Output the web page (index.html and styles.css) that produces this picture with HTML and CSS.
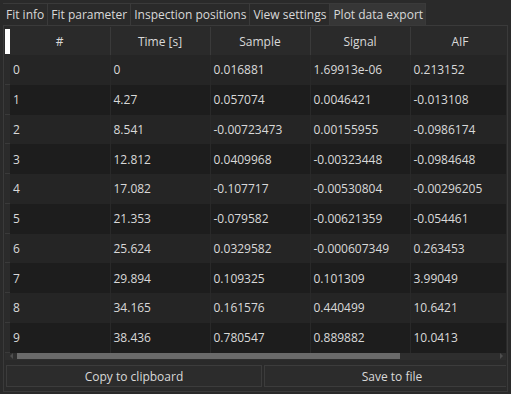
FILE: index.html
```html
<!DOCTYPE html>
<html lang="en">
<head>
    <meta charset="UTF-8" />
    <title>Plot data export</title>
    <link rel="stylesheet" href="styles.css">
</head>
<body>
    <div class="window">
        <div class="tabs">
            <div class="tab">Fit info</div>
            <div class="tab">Fit parameter</div>
            <div class="tab">Inspection positions</div>
            <div class="tab">View settings</div>
            <div class="tab active">Plot data export</div>
        </div>

        <div class="pane">
            <div class="grid">
                <table class="data">
                    <colgroup>
                        <col class="col-vh">
                        <col class="col">
                        <col class="col">
                        <col class="col">
                        <col class="col">
                        <col class="col">
                    </colgroup>
                    <thead>
                        <tr>
                            <th class="corner"><span class="corner-box"></span></th>
                            <th>#</th>
                            <th>Time [s]</th>
                            <th>Sample</th>
                            <th>Signal</th>
                            <th>AIF</th>
                        </tr>
                    </thead>
                    <tbody>
                        <tr><td class="vh"></td><td>0</td><td>0</td><td>0.016881</td><td>1.69913e-06</td><td>0.213152</td></tr>
                        <tr><td class="vh"></td><td>1</td><td>4.27</td><td>0.057074</td><td>0.0046421</td><td>-0.013108</td></tr>
                        <tr><td class="vh"></td><td>2</td><td>8.541</td><td>-0.00723473</td><td>0.00155955</td><td>-0.0986174</td></tr>
                        <tr><td class="vh"></td><td>3</td><td>12.812</td><td>0.0409968</td><td>-0.00323448</td><td>-0.0984648</td></tr>
                        <tr><td class="vh"></td><td>4</td><td>17.082</td><td>-0.107717</td><td>-0.00530804</td><td>-0.00296205</td></tr>
                        <tr><td class="vh"></td><td>5</td><td>21.353</td><td>-0.079582</td><td>-0.00621359</td><td>-0.054461</td></tr>
                        <tr><td class="vh"></td><td>6</td><td>25.624</td><td>0.0329582</td><td>-0.000607349</td><td>0.263453</td></tr>
                        <tr><td class="vh"></td><td>7</td><td>29.894</td><td>0.109325</td><td>0.101309</td><td>3.99049</td></tr>
                        <tr><td class="vh"></td><td>8</td><td>34.165</td><td>0.161576</td><td>0.440499</td><td>10.6421</td></tr>
                        <tr><td class="vh"></td><td>9</td><td>38.436</td><td>0.780547</td><td>0.889882</td><td>10.0413</td></tr>
                    </tbody>
                </table>
            </div>

            <div class="hscroll">
                <span class="arrow arrow-left"></span>
                <span class="handle"></span>
                <span class="arrow arrow-right"></span>
            </div>

            <div class="buttons">
                <button class="btn">Copy to clipboard</button>
                <button class="btn">Save to file</button>
            </div>
        </div>
    </div>
</body>
</html>
```

FILE: styles.css
```css
:root {
    --bg: #2a2a2a;
    --line: #3a3a3a;
    --text: #d9d9d9;
    --row-a: #252525;
    --row-b: #1d1d1d;
}

body {
    margin: 0;
    background-color: var(--bg);
    font-family: "Open Sans", "DejaVu Sans", sans-serif;
    font-size: 12px;
    color: var(--text);
}

.window {
    width: 511px;
    height: 394px;
    padding: 3px 3px 0;
    box-sizing: border-box;
    overflow: hidden;
}

/* tab bar */
.tabs {
    display: flex;
    height: 22px;
}

.tab {
    padding: 0 3px;
    line-height: 21px;
    border-top: 1px solid var(--line);
    border-right: 1px solid var(--line);
    white-space: nowrap;
}

.tab.active {
    padding: 0 2px 0 3px;
    background-color: #363636;
}

.pane {
    border: 1px solid var(--line);
    padding: 1px;
}

/* table */
.grid {
    height: 325.5px;
    overflow: hidden;
}

.data {
    border-collapse: collapse;
    table-layout: fixed;
    width: 505px;
}

.col-vh {
    width: 5px;
}

.col {
    width: 100px;
}

.data th {
    height: 28px;
    padding: 0;
    font-weight: normal;
    text-align: center;
    background-color: var(--bg);
    border-right: 1px solid var(--line);
    white-space: nowrap;
}

.data th.corner {
    border-right: none;
    vertical-align: middle;
}

.corner-box {
    display: block;
    width: 5px;
    height: 25px;
    margin-top: 1px;
    background-color: #ffffff;
}

.data tbody tr {
    height: 29.75px;
}

.data td {
    padding: 0 3px;
    white-space: nowrap;
    overflow: hidden;
    border-right: 1px solid #292929;
}

.data tbody tr:nth-child(odd) td {
    background-color: var(--row-a);
}

.data tbody tr:nth-child(even) td {
    background-color: var(--row-b);
}

/* row header strip with tick marks at row boundaries */
.data tbody td.vh {
    padding: 0;
    border-right: none;
    background: linear-gradient(to top, var(--line) 1px, #2b2b2b 1px);
}

/* horizontal scroll bar */
.hscroll {
    display: flex;
    align-items: center;
    height: 7.5px;
    background-color: #2e2e2e;
}

.arrow {
    width: 0;
    height: 0;
    border-top: 3px solid transparent;
    border-bottom: 3px solid transparent;
}

.arrow-left {
    margin: 0 4px 0 5px;
    border-right: 3px solid #4e4e4e;
}

.arrow-right {
    margin-left: auto;
    margin-right: 3px;
    border-left: 3px solid #4e4e4e;
}

.handle {
    width: 383px;
    height: 6px;
    background-color: #6a6a6a;
}

/* buttons */
.buttons {
    display: flex;
    gap: 2px;
    margin: 5px 0 3px 1px;
    overflow: hidden;
}

.btn {
    flex: 0 0 256px;
    height: 22px;
    padding: 0;
    font-family: inherit;
    font-size: 12px;
    color: var(--text);
    background-color: #2c2c2c;
    border: 1px solid #3c3c3c;
}
```
